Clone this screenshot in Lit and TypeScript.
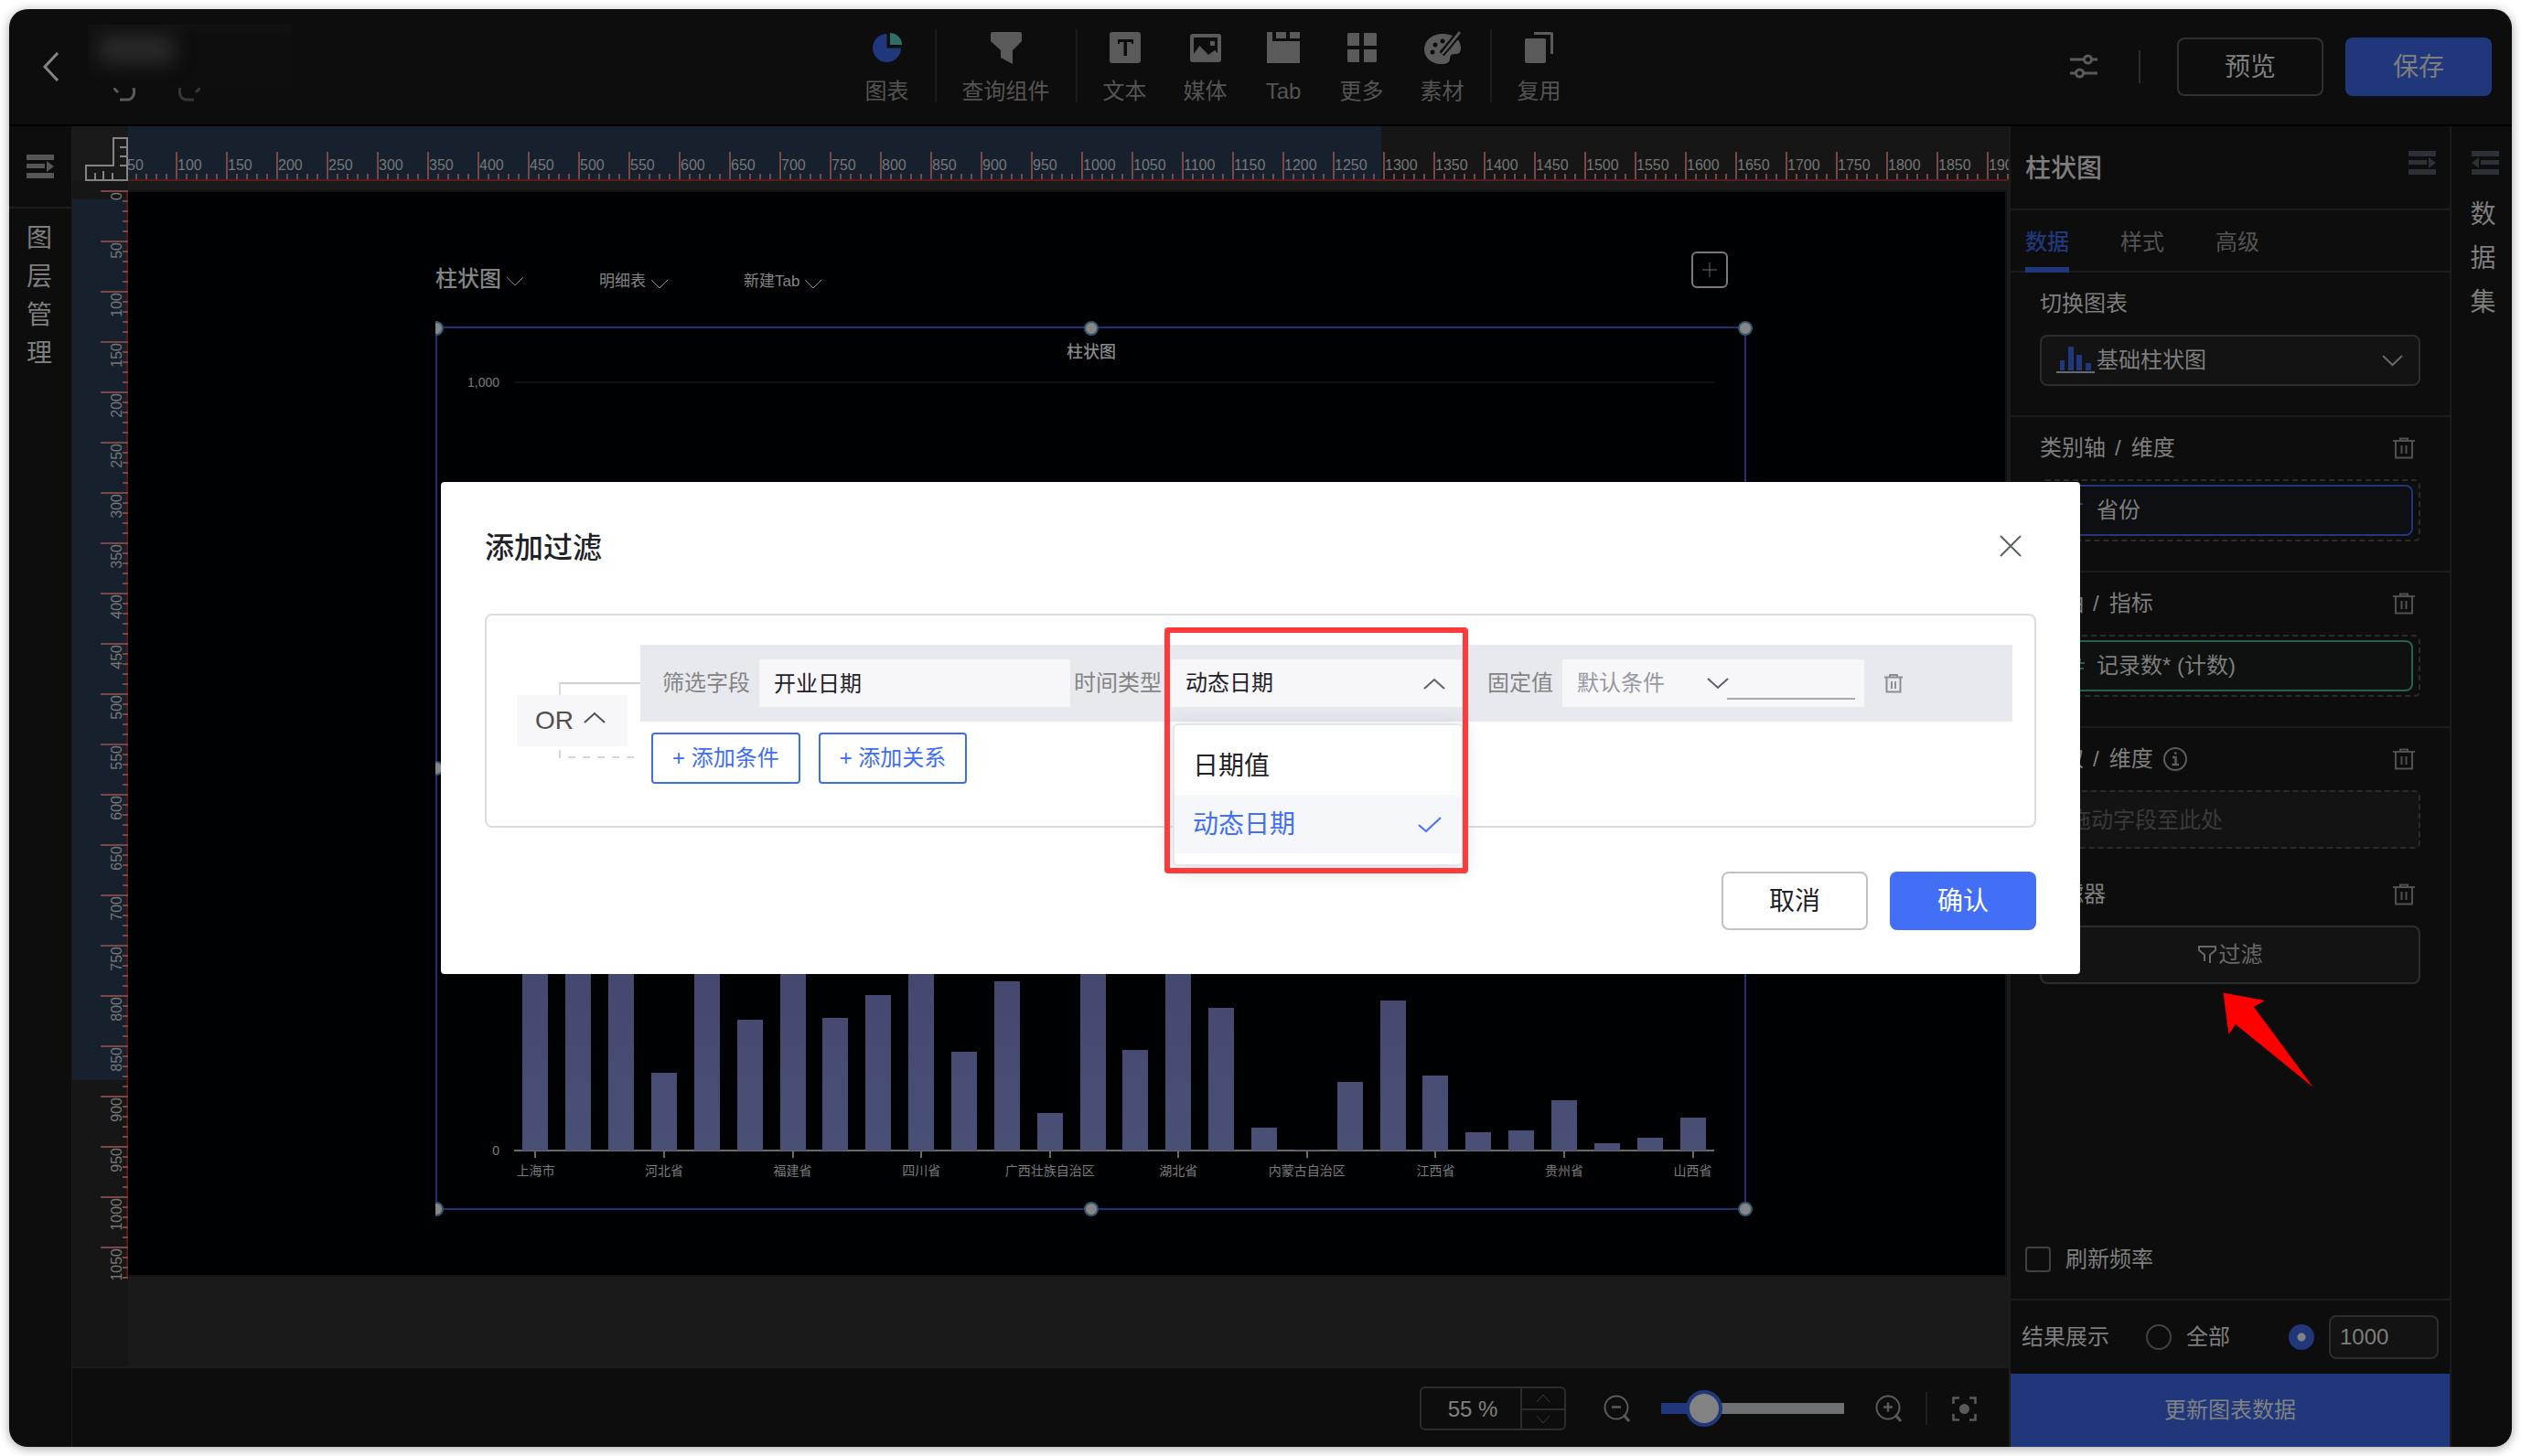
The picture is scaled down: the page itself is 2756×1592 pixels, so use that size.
import { LitElement, html, svg, css } from "lit";
import { customElement } from "lit/decorators.js";

const strokeIcon = (w: number, h: number, d: string, width = 2) => html`
  <svg width=${w} height=${h} viewBox="0 0 ${w} ${h}" fill="none" stroke="currentColor" stroke-width=${width} aria-hidden="true">
    <path d=${d}></path>
  </svg>`;

const fillIcon = (w: number, h: number, d: string) => html`
  <svg width=${w} height=${h} viewBox="0 0 ${w} ${h}" fill="currentColor" fill-rule="evenodd" aria-hidden="true">
    <path d=${d}></path>
  </svg>`;

const chevronDown = (w = 22, h = 13, width = 2) => strokeIcon(w, h, `M1 1 L${w / 2} ${h - 2} L${w - 1} 1`, width);
const chevronUp = (w = 24, h = 13) => strokeIcon(w, h, `M1 ${h - 1} L${w / 2} 2 L${w - 1} ${h - 1}`);
const trash = () => strokeIcon(24, 24, "M0 4 H24 M8 3.5 V1.5 H16 V3.5 M3 4 V22.5 H21 V4 M9.5 9 V18 M14.5 9 V18");
const trashNarrow = () => strokeIcon(20, 22, "M0 4.5 H20 M6 4 V2 H14 V4 M2.5 5 V20.5 H17.5 V5 M8 9 V17 M12 9 V17");
const foldRight = () => fillIcon(30, 26, "M0 0H30V6H0Z M0 10H20V15H0Z M22 7L30 13L22 19Z M0 20H30V26H0Z");
const foldLeft = () => fillIcon(30, 26, "M0 0H30V6H0Z M10 10H30V15H10Z M8 7L0 13L8 19Z M0 20H30V26H0Z");

const pieIcon = html`
  <svg width="32" height="32" viewBox="0 0 32 32" aria-hidden="true">
    <path fill="#21377b" d="M15.5 1 A15.5 15.5 0 1 0 31 16.5 H15.5Z"></path>
    <path fill="#2f6e66" d="M19 0 A13 13 0 0 1 32 13 H19Z"></path>
  </svg>`;

const toolIcons = {
  funnel: fillIcon(34, 35, "M2 0H32Q34 0 34 2V10L24 20V35L11 28V20L0 10V2Q0 0 2 0Z"),
  text: fillIcon(34, 34, "M3 0H31Q34 0 34 3V31Q34 34 31 34H3Q0 34 0 31V3Q0 0 3 0Z M9 8V13H11V11H15.500V26H19V11H24V13H26V8Z"),
  media: fillIcon(34, 31, "M3 0H31Q34 0 34 3V28Q34 31 31 31H3Q0 31 0 28V3Q0 0 3 0Z M4 4V22L10.500 13L20 23L27 18L30 21V4Z M22 8H27V13H22Z"),
  tab: fillIcon(36, 34, "M0 0H6V10H36V34H0Z M10 0H21V7H10Z M25 0H36V7H25Z"),
  more: fillIcon(32, 32, "M1 0H13V14H0V1Z M18 0H31L32 1V14H18Z M0 18H13V32H1L0 31Z M18 18H32V31L31 32H18Z"),
  copy: fillIcon(31, 34, "M2 7H21Q23 7 23 9V32Q23 34 21 34H2Q0 34 0 32V9Q0 7 2 7Z M10 0H29Q31 0 31 2V24H28V3H10Z"),
};

const paletteIcon = html`
  <svg width="40" height="36" viewBox="0 0 40 36" aria-hidden="true">
    <path fill="currentColor" d="M20 3C9 3 0 10 0 20C0 29 8 36 18 36C25 36 28 34 28 30C28 26 30 25 35 25C39 25 40 22 40 18C40 9 31 3 20 3Z"></path>
    <circle cx="12" cy="15" r="2.500" fill="#0d0d0d"></circle>
    <circle cx="9" cy="23" r="2.500" fill="#0d0d0d"></circle>
    <circle cx="20" cy="11" r="2.500" fill="#0d0d0d"></circle>
    <path d="M39 1L26 17L19 25" stroke="#0d0d0d" stroke-width="7" fill="none"></path>
    <path d="M38 0L26 15L19 24Q18 27 21 25L28 17L40 2Z" fill="currentColor"></path>
  </svg>`;

const MAJOR = 55;
const MINOR = 11;

const horizontalRuler = () => {
  const marks = [];
  for (let value = 50; value <= 1900; value += 50) {
    const x = 52 + ((value - 100) / 50) * MAJOR;
    marks.push(svg`<rect class="tick" x=${x} y="28" width="2" height="30"></rect>
      <text class="ruler-text" x=${x + 2} y="48">${value}</text>`);
    for (let i = 1; i < 5; i++) {
      marks.push(svg`<rect class="tick" x=${x + i * MINOR} y="52" width="2" height="6"></rect>`);
    }
  }
  return html`<svg class="ruler-h" aria-hidden="true">
    <rect class="range" x="0" y="0" width="1370" height="60"></rect>
    ${marks}
    <rect class="ruler-line" x="0" y="58" width="100%" height="2"></rect>
  </svg>`;
};

const verticalRuler = () => {
  const marks = [];
  for (let value = 0; value <= 1080; value += 10) {
    const y = 10 + (value / 10) * MINOR;
    const major = value % 50 === 0;
    marks.push(svg`<rect class="tick" x=${major ? 31 : 55} y=${y} width=${major ? 30 : 6} height="2"></rect>`);
    if (major) {
      marks.push(svg`<text class="ruler-text" text-anchor="end" transform="translate(54 ${y + 2}) rotate(-90)">${value}</text>`);
    }
  }
  return html`<svg class="ruler-v" aria-hidden="true">
    <rect class="range" x="0" y="20" width="61" height="963"></rect>
    <rect class="ruler-line" x="59" y="10" width="2" height="1190"></rect>
    ${marks}
  </svg>`;
};

const provinces: { value: number; name?: string }[] = [
  { value: 820, name: "上海市" }, { value: 760 }, { value: 700 },
  { value: 101, name: "河北省" }, { value: 610 }, { value: 170 },
  { value: 540, name: "福建省" }, { value: 173 }, { value: 202 },
  { value: 480, name: "四川省" }, { value: 129 }, { value: 220 },
  { value: 49, name: "广西壮族自治区" }, { value: 430 }, { value: 131 },
  { value: 390, name: "湖北省" }, { value: 186 }, { value: 30 },
  { value: 1, name: "内蒙古自治区" }, { value: 89 }, { value: 195 },
  { value: 98, name: "江西省" }, { value: 24 }, { value: 26 },
  { value: 66, name: "贵州省" }, { value: 10 }, { value: 17 },
  { value: 43, name: "山西省" },
];

@customElement("bar-chart")
export class BarChart extends LitElement {
  static styles = css`
    :host { display: block; }
    .chart { display: block; width: 100%; height: auto; font-family: "Liberation Sans", "Noto Sans CJK SC", sans-serif; }
    .title { font-size: 18px; font-weight: 500; fill: #8a8a8a; }
    .label { font-size: 14px; fill: #7c7c7c; }
    .grid { fill: #101011; }
    .axis { fill: #6a6a6c; }
  `;

  render() {
    const left = 86;
    const base = 901;
    const step = 1312 / provinces.length;
    return html`
      <svg class="chart" viewBox="0 0 1433 966" role="img" aria-label="柱状图">
        <defs>
          <linearGradient id="bar" gradientUnits="userSpaceOnUse" x1="0" y1="61" x2="0" y2="901">
            <stop offset="0" stop-color="#32325a"></stop>
            <stop offset="1" stop-color="#4a4f76"></stop>
          </linearGradient>
        </defs>
        <text class="title" x="717" y="34" text-anchor="middle">柱状图</text>
        <text class="label" x="70" y="66" text-anchor="end">1,000</text>
        <text class="label" x="70" y="906" text-anchor="end">0</text>
        <rect class="grid" x=${left} y="60" width="1312" height="2"></rect>
        <rect class="axis" x=${left} y="900" width="1312" height="2"></rect>
        ${provinces.map((item, i) => {
          const center = left + step * (i + 0.5);
          const height = item.value * 0.84;
          return svg`
            <rect x=${Math.round(center - 14)} y=${Math.round(base - height)} width="28" height=${Math.round(height)} fill="url(#bar)"></rect>
            ${item.name
              ? svg`<rect class="axis" x=${Math.round(center) - 1} y="902" width="2" height="7"></rect>
                  <text class="label" x=${center} y="928" text-anchor="middle">${item.name}</text>`
              : null}`;
        })}
      </svg>`;
  }
}

@customElement("filter-dialog")
export class FilterDialog extends LitElement {
  static styles = css`
    :host { display: block; width: 65.5%; }
    * { box-sizing: border-box; }
    button, input, select { font: inherit; color: inherit; margin: 0; padding: 0; border: 0; background: none; appearance: none; outline: none; }
    svg { display: block; flex: none; }
    .dialog { background: #fff; border-radius: 4px; padding: 48px; color: #1f2226; font-size: 24px; line-height: 36px; }
    .head { display: flex; justify-content: space-between; align-items: center; height: 48px; margin-bottom: 48px; padding-right: 16px; }
    .title { margin: 0; font-size: 32px; font-weight: 500; }
    .close { color: #5b5f68; padding-bottom: 4px; }
    .panel { display: flex; height: 234px; border: 2px solid #dcdde4; border-radius: 8px; padding: 32px 24px 0 0; }
    .relation { flex: none; width: 168px; padding: 41px 0 0 33px; }
    .link-top { width: 89px; height: 14px; margin-left: 46px; border-top: 2px solid #d0d0d2; border-left: 2px solid #dcdcde; }
    .link-bottom { margin: 4px 0 0 46px; color: #d8d8da; }
    .or { display: grid; width: 121px; height: 56px; background: #f7f7fa; color: #505050; align-items: center; font-size: 28px; }
    .or > * { grid-area: 1 / 1; }
    .or select { width: 100%; height: 56px; padding-left: 20px; }
    .or svg { justify-self: end; margin: 0 24px 8px 0; pointer-events: none; }
    .content { flex: 1; min-width: 0; }
    .row { display: flex; align-items: center; height: 84px; padding: 0 24px; background: #e8e9ee; }
    .caption { flex: none; color: #848484; margin-right: 10px; }
    .caption-fixed { margin-left: 26px; }
    .field { height: 52px; background: #f7f7fa; padding: 0 16px; min-width: 0; }
    .field-name { flex: 0 1 340px; margin-right: 4px; padding-bottom: 3px; }
    .picker { position: relative; flex: 0 1 320px; min-width: 0; display: grid; align-items: center; }
    .picker > .field { grid-area: 1 / 1; width: 100%; }
    .picker > svg { grid-area: 1 / 1; justify-self: end; margin-right: 20px; color: #5b5f68; pointer-events: none; }
    .fixed { flex: 0 1 330px; display: flex; align-items: center; height: 52px; min-width: 0; background: #f7f7fa; color: #9699a1; }
    .fixed select { flex: 1; height: 52px; padding-left: 16px; min-width: 0; }
    .fixed svg { color: #5b5f68; margin-right: -2px; }
    .fixed input { width: 140px; height: 36px; margin-right: 10px; align-self: center; border-bottom: 2px solid #a9acb2; }
    .remove { margin-left: 22px; color: #8b8e96; }
    .menu { position: absolute; left: 2px; top: 70px; width: 318px; margin: 0; padding: 12px 0; list-style: none; background: #fff; border: 2px solid #e4e6ed; border-radius: 6px; box-shadow: 0 4px 24px rgba(0, 0, 0, 0.14); font-size: 28px; }
    .option { display: flex; justify-content: space-between; align-items: center; height: 64px; padding: 2px 22px 0 20px; }
    .chosen { background: #f5f7fb; color: #426ff5; }
    .mark { position: absolute; left: -7px; top: -35px; width: 332px; height: 269px; border: 6px solid #ff3a3a; border-radius: 4px; pointer-events: none; }
    .adders { display: flex; gap: 20px; padding: 12px 0 0 12px; }
    .adder { height: 56px; padding: 0 21px; border: 2px solid #3d6df2; border-radius: 4px; color: #3d6df2; }
    .foot { display: flex; justify-content: flex-end; gap: 24px; margin-top: 48px; font-size: 28px; }
    .foot button { width: 160px; height: 64px; border-radius: 8px; padding-top: 2px; }
    .cancel { border: 2px solid #bfc1c7; }
    .confirm { background: #436ff6; color: #fff; }
  `;

  render() {
    return html`
      <section class="dialog" role="dialog" aria-labelledby="title">
        <header class="head">
          <h2 class="title" id="title">添加过滤</h2>
          <button class="close" aria-label="关闭">${strokeIcon(24, 24, "M1 1L23 23M23 1L1 23")}</button>
        </header>
        <div class="panel">
          <div class="relation">
            <div class="link-top"></div>
            <label class="or">
              <select aria-label="关系"><option>OR</option></select>
              ${chevronUp(24, 13)}
            </label>
            <svg class="link-bottom" width="84" height="10" fill="none" stroke="currentColor" stroke-width="2" aria-hidden="true">
              <path d="M1 0V9"></path>
              <path d="M10 8H84" stroke-dasharray="8 8"></path>
            </svg>
          </div>
          <div class="content">
            <div class="row">
              <label class="caption" for="name">筛选字段</label>
              <input class="field field-name" id="name" value="开业日期" />
              <label class="caption" for="kind">时间类型</label>
              <div class="picker">
                <select class="field" id="kind"><option>动态日期</option><option>日期值</option></select>
                ${chevronUp(24, 13)}
                <ul class="menu" role="listbox">
                  <li class="option" role="option">日期值</li>
                  <li class="option chosen" role="option" aria-selected="true">动态日期 ${strokeIcon(26, 18, "M1 9L9 16L25 1")}</li>
                </ul>
                <div class="mark"></div>
              </div>
              <label class="caption caption-fixed" for="fixed">固定值</label>
              <div class="fixed">
                <select id="fixed"><option>默认条件</option></select>
                ${chevronDown(24, 13)}
                <input aria-label="值" />
              </div>
              <button class="remove" aria-label="删除">${trashNarrow()}</button>
            </div>
            <div class="adders">
              <button class="adder">+ 添加条件</button>
              <button class="adder">+ 添加关系</button>
            </div>
          </div>
        </div>
        <footer class="foot">
          <button class="cancel">取消</button>
          <button class="confirm">确认</button>
        </footer>
      </section>`;
  }
}

@customElement("config-panel")
export class ConfigPanel extends LitElement {
  static styles = css`
    :host { display: flex; flex-direction: column; width: 480px; flex: none; color: #7e7e7e; font-size: 24px; line-height: 36px; }
    * { box-sizing: border-box; }
    button, input, select { font: inherit; color: inherit; margin: 0; padding: 0; border: 0; background: none; appearance: none; outline: none; }
    svg { display: block; flex: none; }
    .head { display: flex; justify-content: space-between; height: 92px; padding: 27px 15px 0 16px; border-bottom: 2px solid #1c1c1c; }
    .title { margin: 0; font-size: 28px; font-weight: 500; line-height: 40px; }
    .fold { align-self: flex-start; color: #2d3036; }
    .tabs { display: flex; gap: 56px; height: 68px; padding-left: 16px; border-bottom: 2px solid #1c1c1c; }
    .tab { height: 68px; color: #545454; border-bottom: 6px solid transparent; padding-top: 7px; }
    .tab-on { color: #21377b; border-bottom-color: #21377b; font-weight: 500; }
    .block { padding: 16px 32px 32px; border-bottom: 2px solid #1c1c1c; }
    .block-open { padding-bottom: 16px; border-bottom: 0; }
    .line { display: flex; align-items: center; height: 36px; margin-bottom: 16px; }
    .line .bin { margin: 0 6px 0 auto; color: #505050; }
    .slash { margin: 0 11px 0 10px; }
    .info { margin-left: 10px; color: #5c5c5c; }
    .choice { display: grid; align-items: center; height: 56px; border: 2px solid #2d2d2d; border-radius: 8px; background: #131313; }
    .choice > * { grid-area: 1 / 1; }
    .choice select { height: 52px; width: 100%; padding-left: 60px; }
    .choice svg { pointer-events: none; }
    .bars { margin-left: 16px; }
    .arrow { justify-self: end; margin-right: 17px; color: #686868; }
    .zone { height: 68px; padding: 4px 6px; border: 2px dashed #2b2b2b; border-radius: 6px; }
    .zone-empty { height: 64px; padding: 13px 30px 0; background: #131313; color: #3a3a3a; }
    .pill { display: flex; align-items: center; gap: 13px; height: 56px; width: 100%; padding-left: 19px; border: 2px solid #21377b; border-radius: 8px; background: #0e0f12; }
    .pill-green { border-color: #2a5f50; background: #0e1110; }
    .blue { color: #21377b; }
    .green { color: #2a5f50; }
    .last { position: relative; padding-bottom: 0; }
    .filter { display: flex; align-items: center; justify-content: center; gap: 3px; width: 100%; height: 64px; border: 2px solid #2d2d2d; border-radius: 8px; background: #131313; color: #686868; }
    .pointer { position: absolute; left: 232px; top: 141px; }
    .refresh { display: flex; align-items: center; gap: 16px; margin-top: auto; padding: 0 16px 28px; border-bottom: 2px solid #1c1c1c; height: 60px; }
    .check { width: 28px; height: 28px; border: 2px solid #414141; border-radius: 4px; }
    .result { display: flex; align-items: center; height: 80px; padding: 0 12px; }
    .radio { width: 28px; height: 28px; border: 2px solid #414141; border-radius: 50%; }
    .radio-all { margin: 0 16px 0 40px; }
    .radio-on { margin: 0 16px 0 auto; border-color: #21377b; background: radial-gradient(circle, #828282 0 4px, #21377b 5px); }
    .limit { width: 120px; height: 48px; padding-left: 10px; border: 2px solid #2d2d2d; border-radius: 8px; background: #131313; }
    .update { height: 80px; background: #21377b; color: #808183; }
  `;

  private heading(first: string, second?: string, info = false) {
    return html`<div class="line">
      <span>${first}</span>
      ${second ? html`<span class="slash">/</span><span>${second}</span>` : null}
      ${info
        ? html`<svg class="info" width="28" height="28" viewBox="0 0 28 28" fill="none" stroke="currentColor" stroke-width="2" aria-hidden="true">
            <circle cx="14" cy="14" r="12"></circle><path d="M11 12H14.500V20M10.500 20H18M13 7.500H15.500" stroke-width="2.500"></path></svg>`
        : null}
      <button class="bin" aria-label="清空">${trash()}</button>
    </div>`;
  }

  render() {
    return html`
      <header class="head">
        <h2 class="title">柱状图</h2>
        <button class="fold" aria-label="收起">${foldRight()}</button>
      </header>
      <nav class="tabs">
        <button class="tab tab-on">数据</button>
        <button class="tab">样式</button>
        <button class="tab">高级</button>
      </nav>
      <section class="block">
        <div class="line"><label for="type">切换图表</label></div>
        <div class="choice">
          <select id="type"><option>基础柱状图</option></select>
          <svg class="bars" width="42" height="30" viewBox="0 0 42 30" aria-hidden="true">
            <path fill="#21377b" d="M4 15H9V26H4Z M13 0H19V26H13Z M22 9H28V26H22Z M32 18H38V26H32Z"></path>
            <path fill="#696974" d="M0 27H42V29H0Z"></path>
          </svg>
          <span class="arrow">${chevronDown(23, 13)}</span>
        </div>
      </section>
      <section class="block">
        ${this.heading("类别轴", "维度")}
        <div class="zone">
          <button class="pill"><span class="blue">${strokeIcon(20, 20, "M2 3H18M10 3V18")}</span>省份</button>
        </div>
      </section>
      <section class="block">
        ${this.heading("值轴", "指标")}
        <div class="zone">
          <button class="pill pill-green"><span class="green">${strokeIcon(20, 20, "M1 7H20M0 13H19M7 2L5 18M15 2L13 18")}</span>记录数* (计数)</button>
        </div>
      </section>
      <section class="block block-open">
        ${this.heading("钻取", "维度", true)}
        <div class="zone zone-empty">拖动字段至此处</div>
      </section>
      <section class="block block-open last">
        ${this.heading("过滤器")}
        <button class="filter">${strokeIcon(20, 20, "M1 1H19V5L13 10V19M7 17V10L1 5V0")}过滤</button>
        <svg class="pointer" width="100" height="106" viewBox="0 0 100 106" aria-hidden="true">
          <path fill="#ff0000" d="M0.500 0.500L46 9L34 16L99 104L14 35L6.500 46Z"></path>
        </svg>
      </section>
      <label class="refresh"><input class="check" type="checkbox" />刷新频率</label>
      <div class="result">
        <span>结果展示</span>
        <input class="radio radio-all" id="all" type="radio" name="rows" />
        <label for="all">全部</label>
        <input class="radio radio-on" type="radio" name="rows" aria-label="限制行数" checked />
        <input class="limit" value="1000" aria-label="行数" />
      </div>
      <button class="update">更新图表数据</button>`;
  }
}

@customElement("app-root")
export class AppRoot extends LitElement {
  static styles = css`
    :host { display: block; box-sizing: border-box; height: 100vh; padding: 10px; background: #fff; font-family: "Liberation Sans", "Noto Sans CJK SC", sans-serif; font-size: 24px; line-height: 30px; color: #7e7e7e; }
    * { box-sizing: border-box; }
    button, input { font: inherit; color: inherit; margin: 0; padding: 0; border: 0; background: none; appearance: none; outline: none; }
    svg { display: block; flex: none; }
    .window { position: relative; display: flex; flex-direction: column; height: 100%; border-radius: 20px; overflow: hidden; background: #0d0d0d; }
    .shadow { height: 100%; border-radius: 20px; box-shadow: 0 2px 12px rgba(0, 0, 0, 0.35); }

    .top { display: grid; grid-template-columns: 9fr auto 10fr; height: 128px; flex: none; border-bottom: 2px solid #000; }
    .lead { display: flex; align-items: center; padding-left: 37px; gap: 31px; }
    .back { color: #848484; }
    .project { align-self: flex-start; margin-top: 17px; }
    .hidden-name { width: 223px; height: 69px; overflow: hidden; padding: 12px 0 0 12px; background: linear-gradient(#121212, #0e0e0e 14px); }
    .smudge { width: 82px; height: 30px; background: #2a2a2a; filter: blur(10px); }
    .history { display: flex; gap: 47px; padding-left: 28px; color: #5a5a5a; }
    .redo { color: #363636; }
    .tools { display: flex; }
    .group { display: flex; gap: 40px; padding: 24px 28px 0; }
    .group:first-child { padding-left: 0; }
    .group:last-child { padding-right: 0; }
    .rule { width: 2px; height: 80px; margin-top: 22px; background: #1c1c1c; }
    .tool { display: flex; flex-direction: column; align-items: center; height: 82px; min-width: 43px; color: #545454; }
    .glyph { display: flex; align-items: center; height: 36px; margin-bottom: 15px; color: #5a5a5a; }
    .actions { display: flex; align-items: center; justify-content: flex-end; padding-right: 22px; font-size: 28px; }
    .tune { color: #5a5a5a; margin-right: 45px; }
    .bar { width: 2px; height: 36px; background: #2e2e2e; margin-right: 40px; }
    .preview, .save { width: 160px; height: 64px; border-radius: 8px; padding-top: 2px; }
    .preview { border: 2px solid #303030; margin-right: 24px; }
    .save { background: #21377b; }

    .main { display: flex; flex: 1; min-height: 0; }
    .rail { display: flex; flex-direction: column; align-items: center; flex: none; font-size: 28px; }
    .rail-left { width: 69px; border-right: 1px solid #1c1c1c; }
    .rail-right { width: 68px; border-left: 2px solid #1c1c1c; padding-top: 27px; }
    .rail-head { display: flex; justify-content: center; align-items: center; width: 100%; height: 90px; border-bottom: 2px solid #1c1c1c; color: #565656; }
    .rail-icon { color: #2d3036; margin-left: 7px; }
    .vertical { display: flex; flex-direction: column; align-items: center; line-height: 42px; padding: 12px 2px 0 0; }
    .vertical-right { line-height: 48px; padding: 20px 0 0 3px; }

    .work { flex: 1; min-width: 0; display: grid; grid-template-columns: 61px minmax(0, 1fr); grid-template-rows: 60px minmax(0, 1fr) 88px; border-right: 2px solid #1c1c1c; background: #1a1a1a; }
    .corner { padding: 12px 0 0 14px; color: #848484; background: #191919; }
    .ruler-h { width: 100%; height: 60px; background: #161616; }
    .ruler-v { width: 61px; height: 100%; background: #161616; }
    .range { fill: #17212e; }
    .tick { fill: #7a4744; }
    .ruler-line { fill: #541a1c; }
    .ruler-text { font-size: 16px; fill: #767676; }
    .area { padding: 10px 2px 98px 0; min-height: 0; }
    .canvas { position: relative; height: 100%; background: #000103; border: solid #111214; border-width: 2px 2px 2px 0; overflow: hidden; }
    .widget { position: absolute; left: 336px; top: 65px; width: 1433px; }
    .widget-head { display: flex; justify-content: space-between; align-items: flex-start; height: 40px; margin-bottom: 42px; padding-right: 20px; }
    .pages { display: flex; align-items: baseline; gap: 82px; padding-top: 18px; font-size: 17px; }
    .page { display: flex; align-items: center; gap: 5px; line-height: 24px; color: #858585; }
    .page svg { margin-top: 6px; }
    .page-on { font-size: 24px; font-weight: 500; }
    .plus { display: grid; place-items: center; width: 40px; height: 40px; border: 2px solid #7a7a7a; border-radius: 6px; color: #6c6c6c; }
    .frame { position: relative; box-shadow: inset 0 0 0 2px #1f3276; clip-path: inset(-20px -20px -20px 0); }
    .handle { position: absolute; width: 16px; height: 16px; margin: -8px; border: 2px solid #32586e; border-radius: 50%; background: #868686; }
    .w { left: 1px; } .c { left: 50%; } .e { left: calc(100% - 1px); }
    .n { top: 2px; } .m { top: 50%; } .s { top: calc(100% - 1px); }

    .status { grid-column: 1 / -1; display: flex; align-items: center; justify-content: flex-end; background: #0d0d0d; border-top: 2px solid #1c1c1c; padding: 2px 35px 0 0; color: #5a5a5a; }
    .stepper { display: grid; grid-template-columns: 1fr 48px; grid-template-rows: 1fr 1fr; width: 160px; height: 48px; border: 2px solid #2d2d2d; border-radius: 6px; color: #3c3c3c; }
    .percent { grid-row: 1 / 3; width: 100%; min-width: 0; text-align: center; padding: 2px 0 0 4px; color: #808080; }
    .step { display: grid; place-items: center; border-left: 2px solid #2d2d2d; }
    .step + .step { border-top: 2px solid #2d2d2d; }
    .zoom-out { margin: 0 34px 0 41px; }
    .zoom-in { margin: 0 26px 0 34px; }
    .range-input { width: 200px; height: 40px; background: linear-gradient(90deg, #21377b 47px, #707174 47px) center / 100% 12px no-repeat; border-radius: 6px; }
    .range-input::-webkit-slider-runnable-track { height: 40px; }
    .range-input::-webkit-slider-thumb { appearance: none; width: 40px; height: 40px; border: 4px solid #21377b; border-radius: 50%; background: #828282; }
    .thin { width: 2px; height: 36px; background: #1f1f1f; margin-right: 27px; }
    .overlay { position: absolute; inset: 0; display: grid; place-items: center; pointer-events: none; }
    .overlay > * { pointer-events: auto; }
  `;

  private tool(label: string, icon: unknown) {
    return html`<button class="tool"><span class="glyph">${icon}</span>${label}</button>`;
  }

  private magnifier(sign: string) {
    return html`<svg width="29" height="30" viewBox="0 0 29 30" fill="none" stroke="currentColor" stroke-width="2" aria-hidden="true">
      <circle cx="14" cy="14" r="12.500"></circle><path d="M22 22L28 29" stroke-width="3"></path><path d=${sign} stroke-width="2.500"></path>
    </svg>`;
  }

  render() {
    return html`<div class="shadow"><div class="window">
      <header class="top">
        <div class="lead">
          <button class="back" aria-label="返回">${strokeIcon(18, 32, "M16 1L2 16L16 31", 3)}</button>
          <div class="project">
            <div class="hidden-name"><div class="smudge"></div></div>
            <div class="history">
              <button aria-label="撤销">${strokeIcon(24, 15, "M0 0L5 5M22 0C24 7 21 13 15 13H7", 3)}</button>
              <button class="redo" aria-label="重做">${strokeIcon(24, 15, "M24 0L19 5M2 0C0 7 3 13 9 13H17", 3)}</button>
            </div>
          </div>
        </div>
        <nav class="tools">
          <div class="group">${this.tool("图表", pieIcon)}</div>
          <div class="rule"></div>
          <div class="group">${this.tool("查询组件", toolIcons.funnel)}</div>
          <div class="rule"></div>
          <div class="group">
            ${this.tool("文本", toolIcons.text)}
            ${this.tool("媒体", toolIcons.media)}
            ${this.tool("Tab", toolIcons.tab)}
            ${this.tool("更多", toolIcons.more)}
            ${this.tool("素材", paletteIcon)}
          </div>
          <div class="rule"></div>
          <div class="group">${this.tool("复用", toolIcons.copy)}</div>
        </nav>
        <div class="actions">
          <button class="tune" aria-label="设置">
            <svg width="30" height="28" viewBox="0 0 30 28" fill="none" stroke="currentColor" stroke-width="3" aria-hidden="true">
              <path d="M0 6H15M24 6H30M0 21H6M15 21H30"></path>
              <circle cx="19.500" cy="6" r="4"></circle><circle cx="10.500" cy="21" r="4"></circle>
            </svg>
          </button>
          <div class="bar"></div>
          <button class="preview">预览</button>
          <button class="save">保存</button>
        </div>
      </header>
      <div class="main">
        <aside class="rail rail-left">
          <button class="rail-head" aria-label="展开">${foldRight()}</button>
          <div class="vertical">${[..."图层管理"].map((c) => html`<span>${c}</span>`)}</div>
        </aside>
        <main class="work">
          <div class="corner">
            ${strokeIcon(47, 48, "M1 47V31H31V1H46V47Z M38 11H46M38 21H46M38 31H46M11 47V39M20 47V37M30 47V39")}
          </div>
          ${horizontalRuler()}
          ${verticalRuler()}
          <div class="area">
            <div class="canvas">
              <div class="widget">
                <div class="widget-head">
                  <div class="pages">
                    <button class="page page-on">柱状图${chevronDown(20, 12, 1)}</button>
                    <button class="page">明细表${chevronDown(20, 12, 1)}</button>
                    <button class="page">新建Tab${chevronDown(20, 12, 1)}</button>
                  </div>
                  <button class="plus" aria-label="新增">${strokeIcon(16, 16, "M8 0V16M0 8H16", 1)}</button>
                </div>
                <div class="frame">
                  <bar-chart></bar-chart>
                  ${["w n", "c n", "e n", "w m", "e m", "w s", "c s", "e s"].map((p) => html`<span class="handle ${p}"></span>`)}
                </div>
              </div>
            </div>
          </div>
          <footer class="status">
            <div class="stepper">
              <input class="percent" value="55 %" aria-label="缩放比例" />
              <button class="step" aria-label="增加">${strokeIcon(16, 10, "M1 9L8 1L15 9", 1)}</button>
              <button class="step" aria-label="减少">${strokeIcon(16, 10, "M1 1L8 9L15 1", 1)}</button>
            </div>
            <button class="zoom-out" aria-label="缩小">${this.magnifier("M9 13.500H19")}</button>
            <input class="range-input" type="range" min="0" max="100" value="17" aria-label="缩放" />
            <button class="zoom-in" aria-label="放大">${this.magnifier("M9 13.500H19M14 8.500V18.500")}</button>
            <div class="thin"></div>
            <button aria-label="适应屏幕">
              <svg width="27" height="27" viewBox="0 0 27 27" fill="none" stroke="currentColor" stroke-width="2.500" aria-hidden="true">
                <path d="M1.500 8V1.500H8M19 1.500H25.500V8M25.500 19V25.500H19M8 25.500H1.500V19"></path>
                <circle cx="13.500" cy="13.500" r="5.500" fill="currentColor" stroke="none"></circle>
              </svg>
            </button>
          </footer>
        </main>
        <config-panel></config-panel>
        <aside class="rail rail-right">
          <button class="rail-icon" aria-label="展开">${foldLeft()}</button>
          <div class="vertical vertical-right">${[..."数据集"].map((c) => html`<span>${c}</span>`)}</div>
        </aside>
      </div>
      <div class="overlay"><filter-dialog></filter-dialog></div>
    </div></div>`;
  }
}
